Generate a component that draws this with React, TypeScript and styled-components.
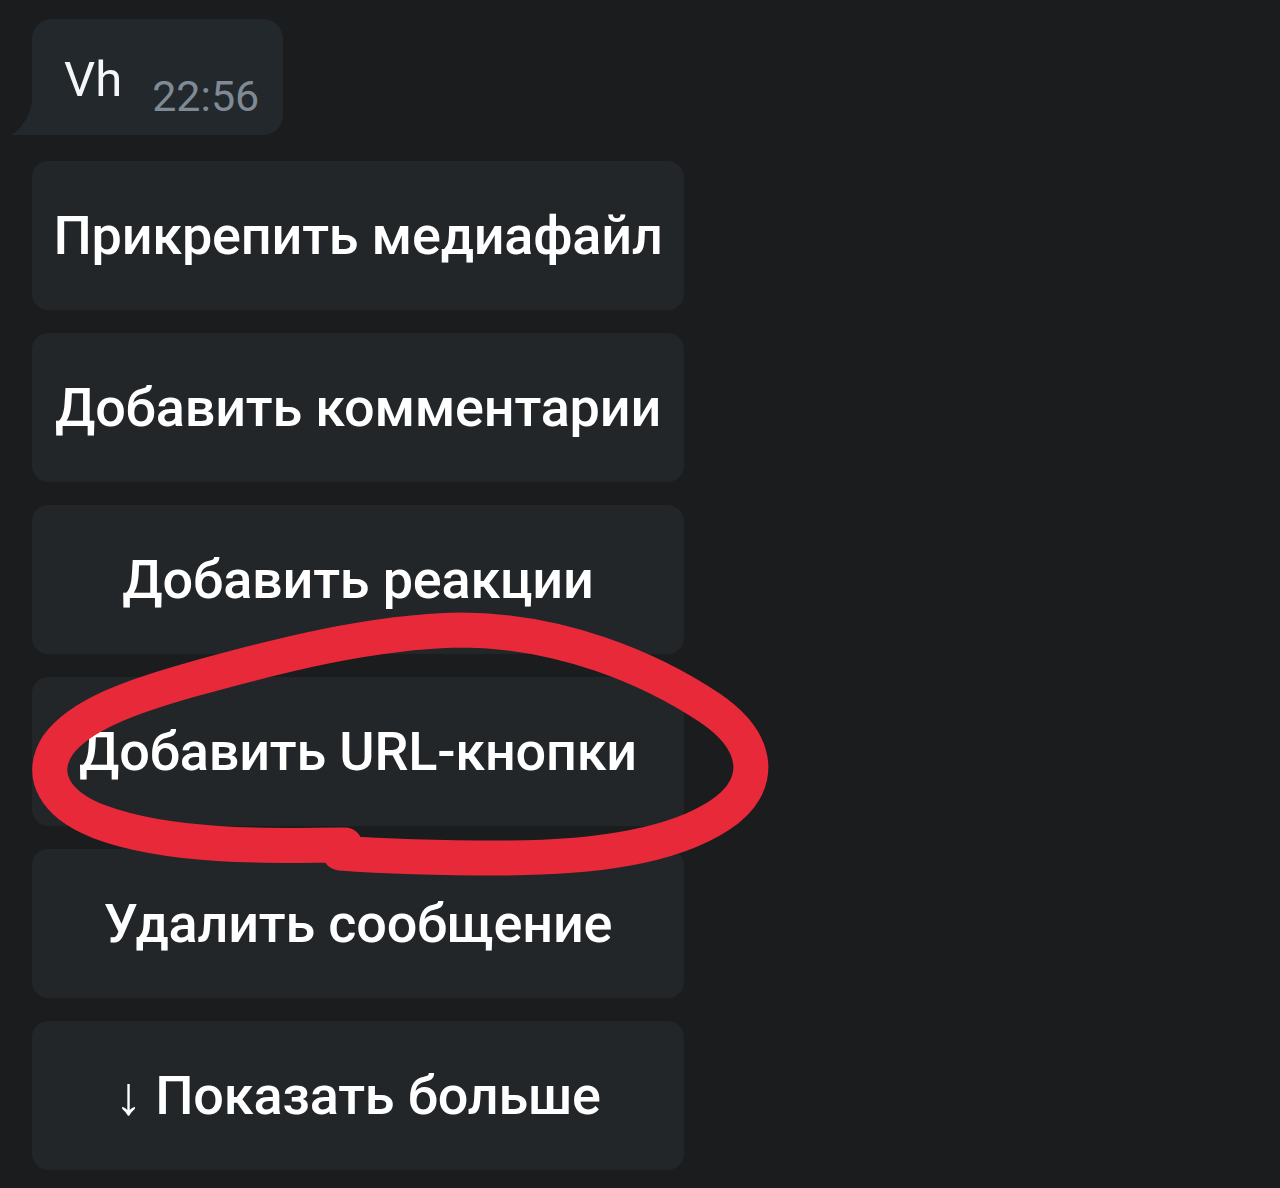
import React from "react";
import styled, { createGlobalStyle } from "styled-components";

const Global = createGlobalStyle`
  html, body { margin: 0; padding: 0; background: #1b1c1e; }
  body { font-family: Roboto, "Noto Sans", sans-serif; }
`;

const Page = styled.div`
  position: relative;
  width: 1280px;
  height: 1188px;
  overflow: hidden;
  background: #1b1c1e;
  padding: 19px 0 0 32px;
  box-sizing: border-box;
  display: flex;
  flex-direction: column;
  align-items: flex-start;
`;

const Bubble = styled.div`
  position: relative;
  width: 251px;
  height: 116px;
  box-sizing: border-box;
  background: #23282c;
  border-radius: 20px 20px 20px 0;
  padding: 0 0 0 32px;
  display: flex;
  align-items: flex-end;
  gap: 30px;
`;

const Tail = styled.svg`
  position: absolute;
  left: -21px;
  bottom: 0;
  width: 22px;
  height: 40px;
`;

const MsgText = styled.span`
  color: #f4f6f7;
  font-size: 49px;
  line-height: 1;
  margin-bottom: 31px;
`;

const Time = styled.span`
  color: #7f8a95;
  font-size: 43px;
  line-height: 1;
  margin-bottom: 17px;
`;

const ButtonList = styled.div`
  margin-top: 26px;
  display: flex;
  flex-direction: column;
  gap: 23px;
`;

const KeyButton = styled.div`
  width: 652px;
  height: 149px;
  border-radius: 16px;
  background: #222629;
  color: #ffffff;
  font-weight: 500;
  font-size: 54px;
  display: flex;
  align-items: center;
  justify-content: center;
  white-space: nowrap;
  letter-spacing: -0.2px;
`;

const Scribble = styled.svg`
  position: absolute;
  left: 0;
  top: 0;
  width: 1280px;
  height: 1188px;
  pointer-events: none;
`;

const buttons = [
  "Прикрепить медиафайл",
  "Добавить комментарии",
  "Добавить реакции",
  "Добавить URL-кнопки",
  "Удалить сообщение",
  "↓ Показать больше",
];

export default function App() {
  return (
    <>
      <Global />
      <Page>
        <Bubble>
          <Tail viewBox="0 0 22 40">
            <path d="M22 0 L22 40 L0 40 C10 34 20 22 22 0 Z" fill="#23282c" />
          </Tail>
          <MsgText>Vh</MsgText>
          <Time>22:56</Time>
        </Bubble>
        <ButtonList>
          {buttons.map((b) => (
            <KeyButton key={b}>{b}</KeyButton>
          ))}
        </ButtonList>
        <Scribble viewBox="0 0 1280 1188">
          <path
            d="M345 845 C270 846 170 848 100 822 C55 805 38 775 58 745 C80 715 130 697 190 680 C280 655 370 632 460 630 C560 630 650 668 710 708 C760 742 765 785 720 815 C670 848 590 858 500 858 C430 858 380 856 340 853"
            fill="none"
            stroke="#e7293a"
            strokeWidth="35"
            strokeLinecap="round"
            strokeLinejoin="round"
          />
        </Scribble>
      </Page>
    </>
  );
}
